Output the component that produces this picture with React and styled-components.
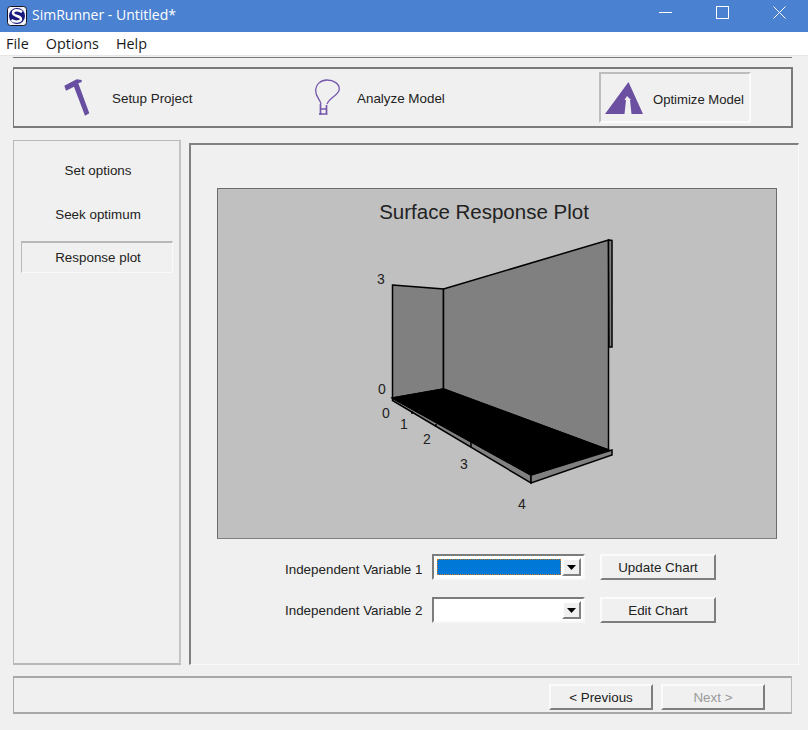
import React from 'react';
import styled, { createGlobalStyle } from 'styled-components';

const Global = createGlobalStyle`
  html, body { margin: 0; padding: 0; background: #f0f0f0; }
  #root { width: 808px; height: 730px; overflow: hidden; }
`;

const Win = styled.div`
  width: 808px; height: 730px; display: flex; flex-direction: column;
  background: #f0f0f0; font-family: "Liberation Sans", Arial, sans-serif; font-size: 13.4px; color: #222;
`;
const TitleBar = styled.div`
  height: 32px; flex: none; display: flex; align-items: center; background: #4a81d0; color: #fff;
  padding-left: 7px; box-sizing: border-box;
`;
const TitleText = styled.span`
  font-family: "Open Sans", sans-serif; font-size: 14px; margin-left: 5px; flex: 1; padding-bottom: 3px;
`;
const WinButton = styled.div`
  width: 57px; height: 32px; display: flex; align-items: center; justify-content: center; padding-bottom: 8px; box-sizing: border-box;
`;
const MenuBar = styled.div`
  height: 23px; flex: none; background: #fff; display: flex; align-items: center; padding-left: 6px; gap: 17px;
  font-family: "Open Sans", sans-serif; font-size: 14.4px; color: #1a1a1a;
`;
const Body = styled.div`
  flex: 1; display: flex; flex-direction: column; box-sizing: border-box;
  border-top: 1px solid #e6e6e6; margin-right: 1px;
  &::before { content: ""; display: block; height: 1px; flex: none; background: #7a7a7a; margin-top: 1px; }
  padding: 0 15px 16px 13px;
`;
const NavGroup = styled.div`
  margin-top: 9px; height: 61px; width: 780px; box-sizing: border-box; flex: none;
  border: 1px solid #7a7a7a; border-width: 2px 2px 2px 1px;
  display: grid; grid-template-columns: 251px 284px 152px; align-items: center; padding-left: 50px;
`;
const NavItem = styled.div`
  display: flex; align-items: center; gap: ${p => p.$gap}px; box-sizing: border-box; white-space: nowrap;
  span { padding-top: 2px; font-size: ${p => p.$active ? '13.1px' : '13.4px'}; }
  ${p => p.$active ? `
    height: 51px; padding-left: 4px;
    border: 2px solid #fafafa; border-top-color: #bdbdbd; border-left-color: #bdbdbd;
    padding-top: 1px;
  ` : ''}
`;
const Columns = styled.div`
  display: flex; gap: 8px; margin-top: 12px; height: 525px; flex: none; width: 786px;
`;
const SidePanel = styled.div`
  width: 168px; box-sizing: border-box; flex: none; padding: 12px 6px 0 7px;
  border: 1px solid #b8b8b8; border-right: 2px solid #c4c4c4; border-bottom: 2px solid #b8b8b8;
  display: flex; flex-direction: column; gap: 12px;
`;
const SideItem = styled.div`
  height: 32px; display: flex; align-items: center; justify-content: center; box-sizing: border-box;
  padding: 2px 0 0 2px;
  ${p => p.$active ? 'padding-top: 0; border: 1px solid #fafafa; border-top: 2px solid #b8b8b8; border-left: 1px solid #b8b8b8;' : ''}
`;
const MainPanel = styled.div`
  width: 610px; margin-top: 3px; box-sizing: border-box; padding: 43px 21px 0 26px;
  border: 2px solid #fafafa; border-top-color: #808080; border-left: 2px solid #808080; border-right-width: 1px; border-bottom-width: 1px;
  display: flex; flex-direction: column;
`;
const ChartBox = styled.div`
  width: 560px; height: 351px; box-sizing: border-box; background: #c0c0c0; flex: none;
  border: 1px solid #6c6c6c; border-bottom-color: #808080;
  svg { display: block; }
`;
const Form = styled.div`
  display: grid; grid-template-columns: 147px 168px 116px; row-gap: 17px;
  margin: 15px 0 0 68px; align-items: center; grid-auto-rows: 26px;
`;
const FieldLabel = styled.div`
  white-space: nowrap; padding-top: ${p => p.$drop}px;
`;
const Combo = styled.div`
  width: 153px; height: 26px; box-sizing: border-box; background: #fff; display: flex; padding: 2px;
  border: 2px solid #f8f8f8; border-top-color: #7c7c7c; border-left-color: #7c7c7c;
`;
const ComboValue = styled.div`
  flex: 1; margin: 1px; box-sizing: border-box;
  ${p => p.$focus ? 'background: #0078d7; outline: 1px dotted #c9772a; outline-offset: -1px;' : ''}
`;
const ComboArrow = styled.div`
  width: 19px; box-sizing: border-box; background: #f0f0f0; display: flex; align-items: center; justify-content: center;
  border: 2px solid #fff; border-right-color: #808080; border-bottom-color: #808080;
`;
const Button = styled.div`
  height: 26px; box-sizing: border-box; background: #f0f0f0; display: flex; align-items: center; justify-content: center;
  border: 2px solid #fbfbfb; border-right-color: #7e7e7e; border-bottom-color: #7e7e7e;
  color: ${p => p.$disabled ? '#9a9a9a' : '#222'};
  width: ${p => p.$w ? p.$w + 'px' : 'auto'};
`;
const FootGroup = styled.div`
  margin-top: 11px; height: 38px; width: 779px; box-sizing: border-box; flex: none;
  border: 1px solid #a8a8a8; border-top-width: 2px; border-right-color: #b8b8b8; border-bottom-width: 2px;
  display: flex; justify-content: flex-end; align-items: flex-start; gap: 8px; padding: 6px 26px 0 0;
`;

const Hammer = () => (
  <svg width="26" height="38" viewBox="0 0 26 38">
    <path d="M.3 6.700 L2 11.700 L10 7.700 L21 36.700 L25.300 34.300 L14.300 4.300 L17.700 3 L17.700 1 L12.700 .3 L6 3.700 Z" fill="#674ea0" />
  </svg>
);
const Bulb = () => (
  <svg width="25" height="38" viewBox="0 0 25 38" fill="none" stroke="#7557ab" strokeWidth="1.300">
    <path d="M6 25 C5 20 .7 18 .7 12 C.7 5 6 1 12 1 C19 1 24.300 5 24.300 10 C24.300 16 15 18 12 25" />
    <path d="M5.500 25 V36 M11.500 26 V35 M5.500 30 H11.500 M4 35 H12.500" strokeWidth="1.700" />
  </svg>
);
const Mountain = () => (
  <svg width="38" height="33" viewBox="0 0 38 33">
    <path fillRule="evenodd" d="M23.500 0 L38 32 L0 32 Z M22 14 L19.500 18 L21 18 L19.500 32 L26.500 32 L25 18 L26 18 Z" fill="#6b4fa1" />
  </svg>
);
const AppIcon = () => (
  <svg width="20" height="20" viewBox="0 0 20 20">
    <rect x=".5" y=".5" width="19" height="19" rx="3" fill="#f4f4fa" stroke="#15151f" />
    <ellipse cx="10" cy="10" rx="8" ry="8" fill="#171a7c" />
    <path d="M15 6 C11 3 6 4 6 7 C6 10.500 14 9.500 14 13 C14 16 8 16.500 4.500 14" fill="none" stroke="#fff" strokeWidth="2.400" />
  </svg>
);
const Arrow = () => <svg width="9" height="5" viewBox="0 0 9 5"><path d="M0 0H9L4.500 5Z" fill="#000" /></svg>;

const ChartText = ({ x, y, children }) => (
  <text x={x} y={y} fontFamily="Liberation Sans, Arial, sans-serif" fontSize="14" fill="#222" textAnchor="middle">{children}</text>
);

const Chart = () => (
  <svg width="558" height="349" viewBox="218 189 558 349">
    <text x="484" y="219" fontFamily="Liberation Sans, Arial, sans-serif" fontSize="20.500" fill="#222" textAnchor="middle">Surface Response Plot</text>
    <g strokeWidth="1.500" stroke="#000">
      <path d="M392.500 285 L443.500 289 L443.500 389 L392.500 398 Z" fill="#808080" />
      <path d="M443.500 289 L608.500 240 L608.500 450 L443.500 389 Z" fill="#808080" />
      <path d="M608.500 240 L612 240.500 V347 L609 347 Z" fill="#808080" />
      <path d="M392.500 398 L531 475 L531 483 L392.500 400.500 Z" fill="#808080" />
      <path d="M531 475 L612 450 L612 455 L531 483 Z" fill="#808080" />
      <path d="M392.500 398 L443.500 389 L608.500 450 L531 475 Z" fill="#000" />
      <path d="M412 411 V414 M436 424 V427 M471 442 V447" fill="none" />
    </g>
    <ChartText x="381" y="284">3</ChartText>
    <ChartText x="382" y="394">0</ChartText>
    <ChartText x="386" y="418">0</ChartText>
    <ChartText x="404" y="429">1</ChartText>
    <ChartText x="427" y="444">2</ChartText>
    <ChartText x="464" y="469">3</ChartText>
    <ChartText x="522" y="509">4</ChartText>
  </svg>
);

export default function App() {
  return (
    <Win>
      <Global />
      <TitleBar>
        <AppIcon />
        <TitleText>SimRunner - Untitled*</TitleText>
        <WinButton><svg width="13" height="13" viewBox="0 0 13 13"><path d="M0 6.500H13" stroke="#fff" /></svg></WinButton>
        <WinButton><svg width="13" height="13" viewBox="0 0 13 13"><rect x=".5" y=".5" width="12" height="12" fill="none" stroke="#fff" /></svg></WinButton>
        <WinButton><svg width="13" height="13" viewBox="0 0 13 13"><path d="M.5 .5L12.500 12.500M12.500 .5L.5 12.500" stroke="#fff" /></svg></WinButton>
      </TitleBar>
      <MenuBar><span>File</span><span>Options</span><span>Help</span></MenuBar>
      <Body>
        <NavGroup>
          <NavItem $gap={22}><Hammer /><span>Setup Project</span></NavItem>
          <NavItem $gap={17}><Bulb /><span>Analyze Model</span></NavItem>
          <NavItem $active $gap={10}><Mountain /><span>Optimize Model</span></NavItem>
        </NavGroup>
        <Columns>
          <SidePanel>
            <SideItem>Set options</SideItem>
            <SideItem>Seek optimum</SideItem>
            <SideItem $active>Response plot</SideItem>
          </SidePanel>
          <MainPanel>
            <ChartBox><Chart /></ChartBox>
            <Form>
              <FieldLabel $drop={4}>Independent Variable 1</FieldLabel>
              <Combo><ComboValue $focus /><ComboArrow><Arrow /></ComboArrow></Combo>
              <Button>Update Chart</Button>
              <FieldLabel $drop={0}>Independent Variable 2</FieldLabel>
              <Combo><ComboValue /><ComboArrow><Arrow /></ComboArrow></Combo>
              <Button>Edit Chart</Button>
            </Form>
          </MainPanel>
        </Columns>
        <FootGroup>
          <Button $w={104}>&lt; Previous</Button>
          <Button $w={104} $disabled>Next &gt;</Button>
        </FootGroup>
      </Body>
    </Win>
  );
}
